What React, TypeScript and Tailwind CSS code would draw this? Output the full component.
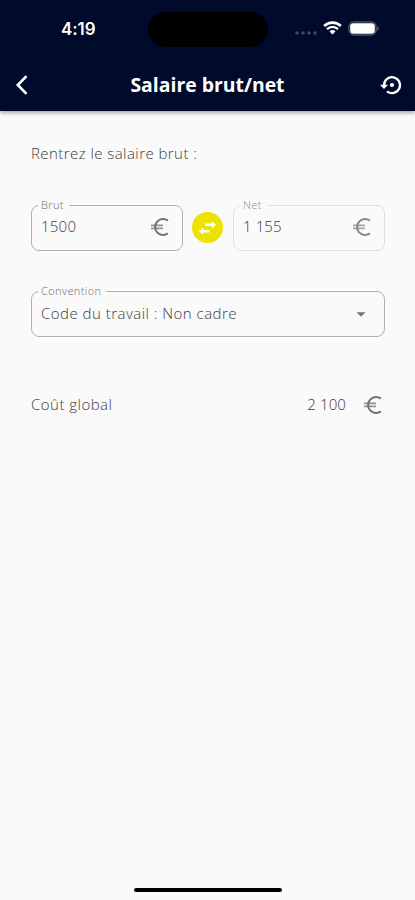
import React, { useState } from "react";
import { MdArrowDropDown } from "react-icons/md";

function StatusBar() {
  return (
    <div className="flex h-[58px] items-center justify-between text-white">
      <div className="w-[148px] pl-[61px] font-['Inter'] text-[17px] leading-none font-semibold tracking-[-0.1px]">
        4:19
      </div>
      <div className="h-[35px] w-[120px] rounded-full bg-black" />
      <div className="flex w-[147px] items-center pl-[27px]">
        <svg width="22" height="14" viewBox="0 0 22 14" fill="#3f4767" aria-hidden>
          <circle cx="2" cy="11" r="1.8" />
          <circle cx="8" cy="11" r="1.8" />
          <circle cx="14" cy="11" r="1.8" />
          <circle cx="20" cy="11" r="1.8" />
        </svg>
        <svg className="mt-[-2px] ml-[6px]" width="19" height="14" viewBox="0 0 20 14" fill="none" stroke="white" aria-hidden>
          <path d="M1.2 4.9a12.5 12.5 0 0 1 17.6 0" strokeWidth="2.8" />
          <path d="M4.3 8.1a8.1 8.1 0 0 1 11.4 0" strokeWidth="2.5" />
          <path d="M10 13.8 6.9 10.7a4.4 4.4 0 0 1 6.2 0z" fill="white" stroke="none" />
        </svg>
        <svg className="mt-[-2px] ml-[6px]" width="32" height="15" viewBox="0 0 32 15" aria-hidden>
          <rect x="1" y="1" width="27" height="13" rx="4.3" fill="none" stroke="#6d7389" />
          <rect x="2.2" y="2.2" width="24.6" height="10.6" rx="3" fill="white" />
          <path d="M29.3 5.2c1.6.5 1.6 4.1 0 4.6z" fill="#6d7389" />
        </svg>
      </div>
    </div>
  );
}

function SwapIcon() {
  return (
    <svg width="19" height="16" viewBox="0 0 19 16" fill="currentColor" aria-hidden>
      <path d="M7.3 3.6h6.5V1.2l4.2 3.6-4.2 3.6V6H7.3z" />
      <path d="M11.7 10H5.2V7.6L1 11.2l4.2 3.6v-2.4h6.5z" />
    </svg>
  );
}

function RestoreIcon() {
  return (
    <svg width="24" height="24" viewBox="0 0 24 24" fill="none" stroke="currentColor" aria-hidden>
      <path d="M5 12.5A8 8 0 1 1 8 18.4" strokeWidth="2.3" />
      <path d="M1 11.8h8l-4 4.2z" fill="currentColor" stroke="none" />
      <circle cx="13" cy="12" r="2.1" fill="currentColor" stroke="none" />
    </svg>
  );
}

function EuroIcon({ className = "" }: { className?: string }) {
  return (
    <svg className={className} width="22" height="22" viewBox="0 0 22 22" fill="none" stroke="currentColor" aria-hidden>
      <path d="M18.9 4.6A8 8 0 1 0 18.9 17.4" strokeWidth="2.1" />
      <path d="M2 9.4h12M2 12.4h12" strokeWidth="1.8" opacity="0.75" />
    </svg>
  );
}

function Field({
  label,
  disabled = false,
  className = "",
  children,
}: {
  label: string;
  disabled?: boolean;
  className?: string;
  children: React.ReactNode;
}) {
  return (
    <fieldset
      className={`min-w-0 rounded-[8px] border px-[6px] pb-[7px] ${disabled ? "border-[#e0e0e0]" : "border-[#b0b0b0]"} ${className}`}
    >
      <legend
        className={`h-[14px] pr-[5px] pl-[3px] text-[11px] leading-[13px] font-light tracking-[0.4px] ${disabled ? "text-[#8c8c8c]" : "text-[#6d6d6d]"}`}
      >
        {label}
      </legend>
      <div className="flex h-[31px] items-center justify-between pl-[3px] text-[15px] font-light">
        {children}
      </div>
    </fieldset>
  );
}

export default function App() {
  const [brut, setBrut] = useState("1500");

  return (
    <div className="flex h-[900px] w-[415px] flex-col bg-[#fafafa] font-['Open_Sans',sans-serif] text-[#3c3c3c]">
      <header className="h-[111px] bg-[#000a2b] shadow-[0_2px_4px_rgba(0,0,0,0.35)]">
        <StatusBar />
        <div className="flex h-[53px] items-center justify-between pr-[12px] pl-[14px] text-white">
          <button aria-label="Retour" className="w-[22px]">
            <svg width="16" height="22" viewBox="0 0 16 22" fill="none" stroke="white" strokeWidth="2.6" aria-hidden>
              <path d="M12.5 2.2 3.8 11l8.7 8.8" />
            </svg>
          </button>
          <h1 className="mt-px text-[19.4px] font-bold">Salaire brut/net</h1>
          <button aria-label="Réinitialiser">
            <RestoreIcon />
          </button>
        </div>
      </header>

      <main className="flex-1 pt-[32px] pr-[30px] pl-[31px]">
        <p className="h-[20px] text-[15px] leading-[20px] font-light tracking-[0.44px]">Rentrez le salaire brut :</p>

        <div className="mt-[35px] flex items-center justify-between">
          <Field label="Brut" className="w-[152px]">
            <input
              value={brut}
              onChange={(e) => setBrut(e.target.value)}
              aria-label="Brut"
              className="w-[80px] bg-transparent pb-[2px] tracking-[0.25px] outline-none"
            />
            <EuroIcon className="mr-[5px] mb-px text-[#737373]" />
          </Field>
          <button
            aria-label="Inverser"
            className="mt-[6px] mr-px grid h-[31px] w-[31px] place-items-center rounded-full bg-[#ece300] text-white"
          >
            <SwapIcon />
          </button>
          <Field label="Net" disabled className="w-[152px]">
            <span className="pb-[2px] tracking-[0.1px]">1 155</span>
            <EuroIcon className="mr-[5px] mb-px text-[#888888]" />
          </Field>
        </div>

        <Field label="Convention" className="mt-[33px]">
          <span className="tracking-[0.48px]">Code du travail : Non cadre</span>
          <MdArrowDropDown size={22} className="mr-[6px] text-[#777777]" />
        </Field>

        <div className="mt-[55px] flex h-[24px] items-center text-[15px] font-light">
          <span className="tracking-[0.48px]">Coût global</span>
          <span className="ml-auto tracking-[0.1px]">2 100</span>
          <EuroIcon className="mt-px mr-px ml-[16px] text-[#737373]" />
        </div>
      </main>

      <div className="mx-auto mb-[8px] h-[4px] w-[148px] rounded-full bg-black" />
    </div>
  );
}
